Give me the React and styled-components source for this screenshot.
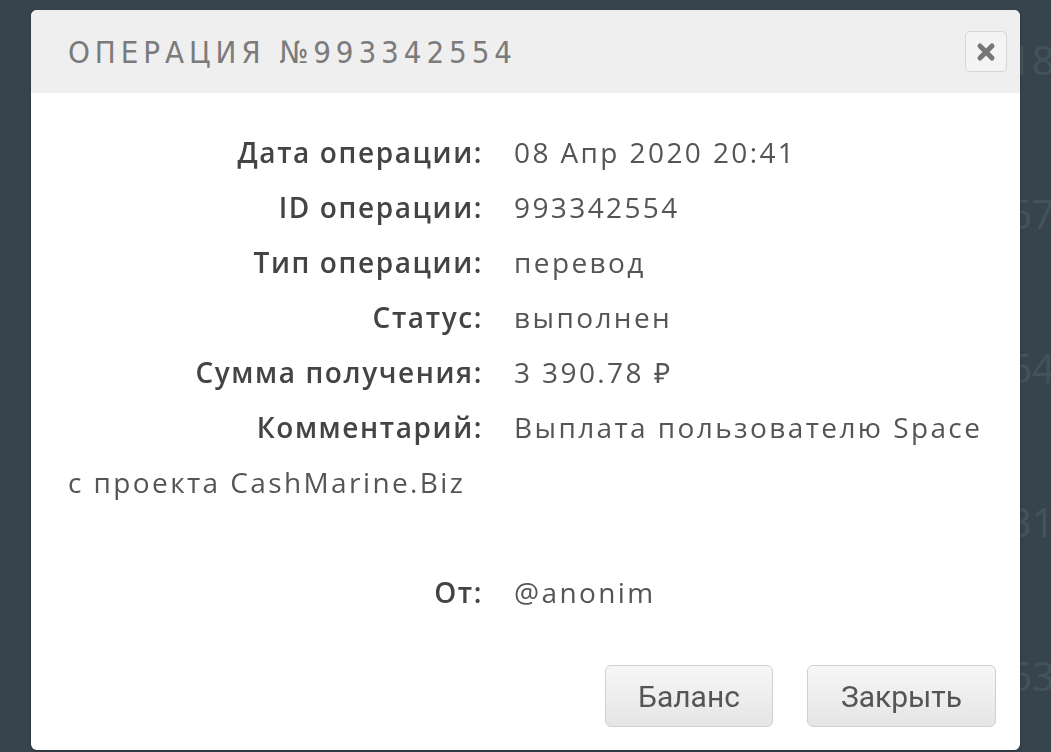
import React from "react";
import styled, { createGlobalStyle } from "styled-components";

const Global = createGlobalStyle`
  html, body { margin: 0; padding: 0; }
  body {
    background: #37444d;
    font-family: "Open Sans", "Liberation Sans", sans-serif;
    overflow: hidden;
  }
`;

const Page = styled.div`
  width: 1051px;
  height: 752px;
  display: flex;
  flex-direction: column;
  align-items: flex-end;
  padding-top: 38px;
  box-sizing: border-box;
  overflow: hidden;
`;

const BgItem = styled.div`
  flex: none;
  height: 154px;
  display: flex;
  flex-direction: column;
  align-items: flex-start;
  width: 42px;
`;

const BgAmount = styled.div`
  font-size: 40px;
  line-height: 44px;
  color: #45525b;
  font-family: "Open Sans", sans-serif;
  white-space: nowrap;
`;

const BgNote = styled.div`
  font-size: 9px;
  color: #43505a;
  white-space: nowrap;
  letter-spacing: 1px;
`;

const Overlay = styled.div`
  position: fixed;
  inset: 0;
  display: flex;
  justify-content: center;
  align-items: flex-start;
  padding-top: 10px;
`;

const Modal = styled.div`
  width: 989px;
  height: 740px;
  background: #ffffff;
  border-radius: 6px;
  overflow: hidden;
  display: flex;
  flex-direction: column;
  box-shadow: 0 1px 3px rgba(0, 0, 0, 0.3);
`;

const Header = styled.div`
  height: 83px;
  flex: none;
  background: #efefef;
  display: flex;
  align-items: center;
  justify-content: space-between;
  padding: 0 13px 0 37px;
`;

const Title = styled.h2`
  margin: 0;
  font-family: "DejaVu Sans Condensed", "DejaVu Sans", sans-serif;
  font-weight: 400;
  font-size: 31px;
  letter-spacing: 4.9px;
  color: #7b7b7b;
`;

const CloseBtn = styled.button`
  width: 42px;
  height: 41px;
  border: 1px solid #d6d6d6;
  border-radius: 5px;
  background: #f4f4f4;
  padding: 0;
  display: flex;
  align-items: center;
  justify-content: center;
`;

const Body = styled.div`
  padding: 32px 37px 0 37px;
  display: flex;
  flex-direction: column;
`;

const Row = styled.div`
  font-size: 28px;
  line-height: 55px;
  color: #555555;
  min-height: 55px;
  letter-spacing: 2.4px;
`;

const Label = styled.span`
  display: inline-block;
  width: 415px;
  text-align: right;
  margin-right: 31px;
  font-weight: 600;
  color: #444444;
  letter-spacing: 1.6px;
`;

const Footer = styled.div`
  margin-top: auto;
  display: flex;
  justify-content: flex-end;
  gap: 34px;
  padding: 0 24px 23px 0;
`;

const Button = styled.button`
  height: 62px;
  width: ${(p) => p.$w}px;
  border: 1px solid #cfcfcf;
  border-radius: 6px;
  background: linear-gradient(#f7f7f7, #e5e5e5);
  font-family: Roboto, sans-serif;
  font-size: 30px;
  color: #555555;
  padding: 0;
`;

const rows = [
  ["Дата операции:", "08 Апр 2020 20:41"],
  ["ID операции:", "993342554"],
  ["Тип операции:", "перевод"],
  ["Статус:", "выполнен"],
  ["Сумма получения:", "3 390.78 ₽"],
  ["Комментарий:", "Выплата пользователю Space с проекта CashMarine.Biz"],
];

const XIcon = () => (
  <svg width="22" height="22" viewBox="0 0 22 22">
    <path
      d="M5 5 L17 17 M17 5 L5 17"
      stroke="#767676"
      strokeWidth="5"
      strokeLinecap="round"
    />
  </svg>
);

export default function App() {
  return (
    <>
      <Global />
      <Page>
        {["18", "67", "64", "31", "63"].map((n) => (
          <BgItem key={n}>
            <BgAmount>{n}</BgAmount>
            <BgNote>........</BgNote>
          </BgItem>
        ))}
      </Page>
      <Overlay>
        <Modal>
          <Header>
            <Title>ОПЕРАЦИЯ №993342554</Title>
            <CloseBtn aria-label="Закрыть">
              <XIcon />
            </CloseBtn>
          </Header>
          <Body>
            {rows.map(([l, v]) => (
              <Row key={l}>
                <Label>{l}</Label>
                {v}
              </Row>
            ))}
            <Row />
            <Row>
              <Label>От:</Label>
              @anonim
            </Row>
          </Body>
          <Footer>
            <Button $w={168}>Баланс</Button>
            <Button $w={189}>Закрыть</Button>
          </Footer>
        </Modal>
      </Overlay>
    </>
  );
}
